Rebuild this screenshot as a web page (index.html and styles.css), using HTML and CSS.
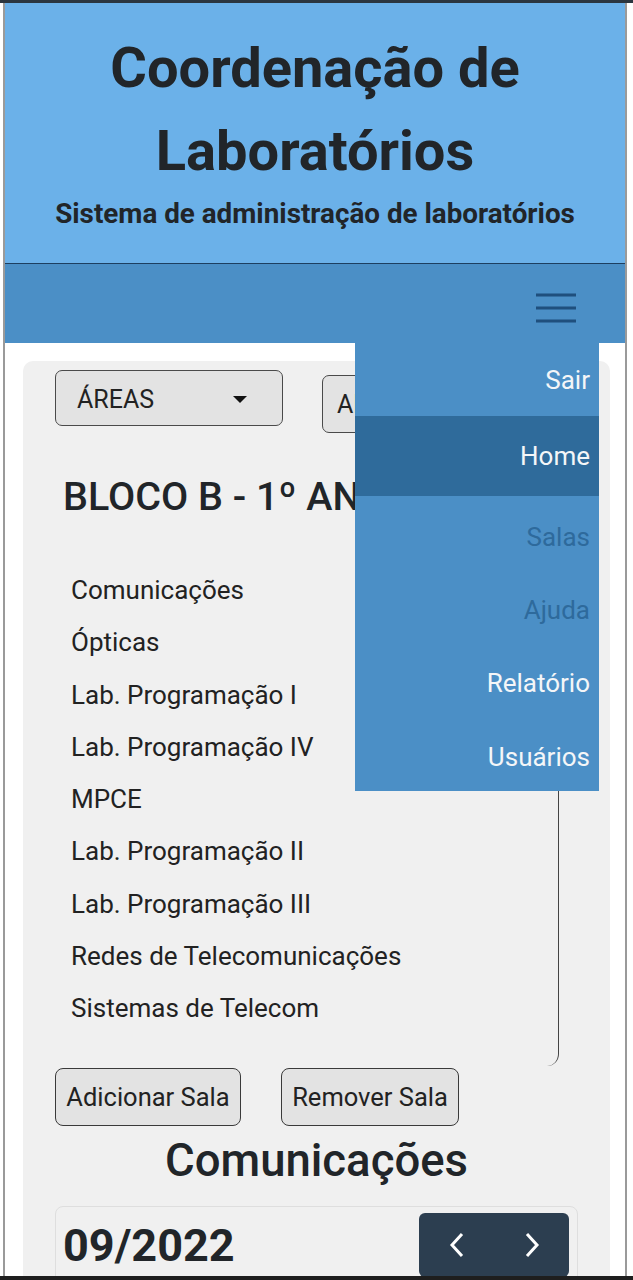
FILE: index.html
```html
<!DOCTYPE html>
<html lang="pt-BR">
<head>
<meta charset="utf-8">
<title>Coordenação de Laboratórios</title>
<link rel="stylesheet" href="styles.css">
</head>
<body>
<div class="topline"></div>
<div class="frame">
  <header class="hero">
    <h1 class="hero-title">Coordenação de Laboratórios</h1>
    <p class="hero-sub">Sistema de administração de laboratórios</p>
  </header>
  <nav class="navbar">
    <button class="burger" aria-label="Menu">
      <svg width="40" height="30" viewBox="0 0 40 30"><path d="M0 2h40M0 15h40M0 28h40" stroke="#1f4f7d" stroke-width="3" fill="none"/></svg>
    </button>
    <ul class="menu">
      <li class="menu-item">Sair</li>
      <li class="menu-item active">Home</li>
      <li class="menu-item muted first-after">Salas</li>
      <li class="menu-item muted">Ajuda</li>
      <li class="menu-item">Relatório</li>
      <li class="menu-item last">Usuários</li>
    </ul>
  </nav>
  <main class="content">
    <section class="panel">
      <div class="filters">
        <div class="select select-area"><span>ÁREAS</span><span class="caret"></span></div>
        <div class="select select-floor"><span>ANDAR</span></div>
      </div>
      <h2 class="block-title">BLOCO B - 1º ANDAR</h2>
      <ul class="roomlist">
        <li>Comunicações</li>
        <li>Ópticas</li>
        <li>Lab. Programação I</li>
        <li>Lab. Programação IV</li>
        <li>MPCE</li>
        <li>Lab. Programação II</li>
        <li>Lab. Programação III</li>
        <li>Redes de Telecomunicações</li>
        <li>Sistemas de Telecom</li>
      </ul>
      <div class="actions">
        <button class="btn btn-add">Adicionar Sala</button>
        <button class="btn btn-remove">Remover Sala</button>
      </div>
      <h2 class="room-title">Comunicações</h2>
      <div class="month-card">
        <span class="month">09/2022</span>
        <div class="pager">
          <span class="pg"><svg width="16" height="26" viewBox="0 0 16 26"><path d="M13 2L3 13l10 11" stroke="#fff" stroke-width="3" fill="none"/></svg></span>
          <span class="pg"><svg width="16" height="26" viewBox="0 0 16 26"><path d="M3 2l10 11L3 24" stroke="#fff" stroke-width="3" fill="none"/></svg></span>
        </div>
      </div>
      <div class="spacer"></div>
    </section>
  </main>
</div>
<div class="sysbar"></div>
</body>
</html>
```
FILE: styles.css
```css
* { box-sizing: border-box; }
html, body { margin: 0; padding: 0; }
body {
  font-family: Roboto, "Liberation Sans", sans-serif;
  color: #212529;
  background: #fff;
}
.topline { height: 3px; background: #2b3640; }
.frame {
  margin: 0 6px 0 3px;
  border-left: 2px solid #9a9a9a;
  border-right: 2px solid #9a9a9a;
  background: #fff;
}
.hero {
  background: #6bb1e9;
  height: 261px;
  border-bottom: 1px solid #1d3f60;
  text-align: center;
  padding-top: 24px;
}
.hero-title {
  margin: 0 auto;
  font-size: 56px;
  line-height: 83px;
  font-weight: 700;
  width: 480px;
}
.hero-sub {
  margin: 5px 0 0;
  font-size: 27.8px;
  font-weight: 700;
  line-height: 32px;
}
.navbar {
  position: relative;
  background: #4b8fc6;
  height: 79px;
  display: flex;
  justify-content: flex-end;
  align-items: flex-start;
}
.burger {
  background: none;
  border: 0;
  padding: 0;
  margin: 29px 49px 0 0;
  width: 40px;
  height: 30px;
  display: block;
}
.burger svg { display: block; }
.menu {
  position: absolute;
  top: 79px;
  right: 26px;
  width: 244px;
  margin: 0;
  padding: 0;
  list-style: none;
  background: #4b8fc6;
  z-index: 5;
}
.menu-item {
  height: 73px;
  display: flex;
  align-items: center;
  justify-content: flex-end;
  padding-right: 9px;
  font-size: 26px;
  color: #f4f6f8;
}
.menu-item.active { height: 80px; background: #2f6b9b; }
.menu-item.muted { color: #2e6a9c; }
.menu-item.first-after { margin-top: 4px; }
.menu-item.last { height: 72px; padding-top: 4px; }
.content { padding: 18px 15px 0 18px; }
.panel {
  background: #f0f0f0;
  border-radius: 10px 10px 0 0;
  padding: 9px 32px 0 32px;
}
.filters { display: flex; gap: 39px; align-items: flex-start; }
.select {
  height: 56px;
  border: 1px solid #4a4a4a;
  border-radius: 7px;
  background: #e3e3e3;
  display: flex;
  align-items: center;
  font-size: 25px;
  color: #222;
}
.select-area { width: 228px; padding: 3px 35px 0 21px; justify-content: space-between; }
.select-floor { width: 200px; height: 58px; margin-top: 5px; padding-left: 14px; }
.caret {
  width: 0; height: 0;
  border-left: 7px solid transparent;
  border-right: 7px solid transparent;
  border-top: 7px solid #111;
}
.block-title {
  margin: 39px 0 0 8px;
  font-size: 39.5px;
  font-weight: 500;
  line-height: 50px;
}
.roomlist {
  list-style: none;
  margin: 0;
  width: 504px;
  padding: 42px 0 31px 16px;
  border-right: 1.5px solid #444;
  border-bottom-right-radius: 12px;
}
.roomlist li {
  font-size: 26px;
  line-height: 52.3px;
  color: #222;
}
.actions { display: flex; gap: 40px; margin-top: 2px; }
.btn {
  font-family: inherit;
  font-size: 25.5px;
  color: #222;
  background: #e3e3e3;
  border: 1px solid #3a3a3a;
  border-radius: 8px;
  height: 58px;
  padding: 0 9px;
}
.btn-add { width: 186px; }
.btn-remove { width: 178px; }
.room-title {
  margin: 10px 0 0;
  text-align: center;
  font-size: 45.5px;
  font-weight: 500;
  line-height: 50px;
}
.month-card {
  margin-top: 20px;
  border: 1px solid #dedede;
  border-radius: 8px;
  padding: 6px 8px 8px 7px;
  display: flex;
  justify-content: space-between;
  align-items: flex-start;
}
.month {
  font-size: 45px;
  font-weight: 700;
  line-height: 62px;
  margin-top: 2px;
}
.pager {
  width: 150px;
  height: 64px;
  background: #2c3e50;
  border-radius: 6px;
  display: flex;
}
.pg { flex: 1; display: flex; align-items: center; justify-content: center; }
.pg svg { display: block; }
.spacer { height: 120px; }
.sysbar {
  position: fixed;
  left: 0; right: 0; bottom: 0;
  height: 4px;
  background: #1e1e1e;
  z-index: 10;
}
```
